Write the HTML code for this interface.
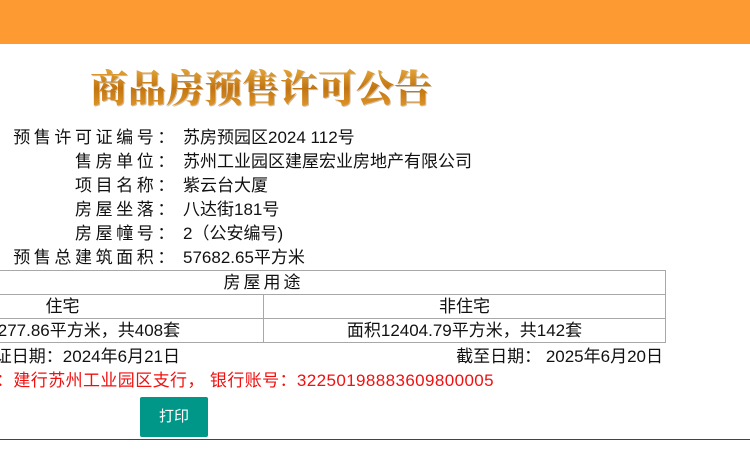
<!DOCTYPE html>
<html><head><meta charset="utf-8"><style>
body{margin:0;width:750px;height:450px;overflow:hidden;background:#fff;font-family:"Liberation Sans","Noto Sans CJK SC",sans-serif;color:#111;font-size:17px}
#w{position:relative;width:750px;height:450px;overflow:hidden}
.bar{position:absolute;left:0;top:0;width:750px;height:44px;background:#fd9a32}
.title{position:absolute;left:90px;top:58px;font-family:"Noto Serif CJK SC",serif;font-weight:900;font-size:38px;white-space:nowrap;color:#d08a18;background:linear-gradient(#f6c050,#c27410 55%,#e8a030);-webkit-background-clip:text;background-clip:text;-webkit-text-fill-color:transparent;filter:drop-shadow(1px 1px 0 rgba(120,70,0,.35))}
.row{position:absolute;left:0;width:750px;height:24px;line-height:24px;white-space:nowrap}
.lab{position:absolute;right:572px;letter-spacing:3.6px;text-align:right;font-size:17px}
.val{position:absolute;left:183px}
.tb{position:absolute;left:0;top:270px;width:666px;height:74px;overflow:hidden}
table{position:absolute;left:-139px;top:0;width:805px;border-collapse:collapse}
td{border:1px solid #a8a8a8;height:23px;padding:0;text-align:center;line-height:23px}
.t{position:absolute;white-space:nowrap;line-height:24px}
.btn{position:absolute;left:140px;top:397px;width:68px;height:40px;background:#009688;color:#fff;font-size:15px;text-align:center;line-height:40px;border-radius:2px}
.hr{position:absolute;left:0;top:439px;width:750px;height:1px;background:#444}
</style></head><body><div id="w">
<div class="bar"></div>
<div class="title">商品房预售许可公告</div>
<div class="row" style="top:126px"><span class="lab">预售许可证编号：</span><span class="val">苏房预园区2024 112号</span></div>
<div class="row" style="top:150px"><span class="lab">售房单位：</span><span class="val">苏州工业园区建屋宏业房地产有限公司</span></div>
<div class="row" style="top:174px"><span class="lab">项目名称：</span><span class="val">紫云台大厦</span></div>
<div class="row" style="top:198px"><span class="lab">房屋坐落：</span><span class="val">八达街181号</span></div>
<div class="row" style="top:222px"><span class="lab">房屋幢号：</span><span class="val">2（公安编号)</span></div>
<div class="row" style="top:246px"><span class="lab">预售总建筑面积：</span><span class="val">57682.65平方米</span></div>
<div class="tb"><table>
<tr><td colspan="2" style="letter-spacing:3px">房屋用途</td></tr>
<tr><td style="width:401px">住宅</td><td>非住宅</td></tr>
<tr><td>面积45277.86平方米，共408套</td><td>面积12404.79平方米，共142套</td></tr>
</table></div>
<div class="t" style="right:570px;top:345px">发证日期：2024年6月21日</div>
<div class="t" style="right:87px;top:345px">截至日期：&nbsp;2025年6月20日</div>
<div class="t" style="left:-4px;top:369px;color:#f01010;letter-spacing:0.4px">：建行苏州工业园区支行，&nbsp;银行账号：32250198883609800005</div>
<div class="btn">打印</div>
<div class="hr"></div>
</div></body></html>
